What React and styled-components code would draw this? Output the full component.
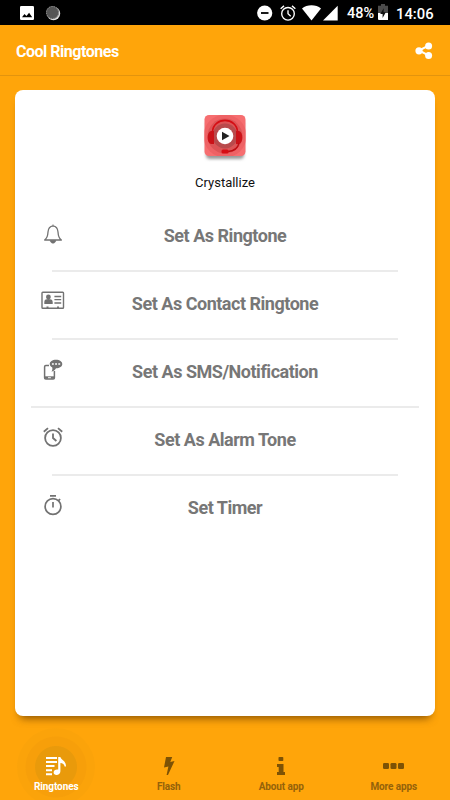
import React from "react";
import styled, { createGlobalStyle } from "styled-components";

const GlobalStyle = createGlobalStyle`
  * {
    box-sizing: border-box;
  }
  body {
    margin: 0;
    font-family: Roboto, "Liberation Sans", sans-serif;
  }
  svg {
    display: block;
    flex: none;
  }
`;
const Container = styled.div`
  width: 450px;
  height: 800px;
  display: flex;
  flex-direction: column;
  background-color: #ffa50a;
  overflow: hidden;
`;
const StatusBar = styled.div`
  height: 25px;
  padding-left: 20px;
  display: flex;
  justify-content: space-between;
  align-items: center;
  background-color: #000000;
  color: #ffffff;
`;
const StatusLeft = styled.div`
  display: flex;
  align-items: center;
  gap: 11px;
`;
const StatusRight = styled.div`
  width: 193px;
  display: grid;
  grid-template-columns: 23px 22px 21px 24px 31px 18px 54px;
  align-items: center;
`;
const StatusText = styled.span`
  height: 25px;
  padding-top: 3px;
  font-size: ${props => props.$size};
  font-weight: 500;
  line-height: 22px;
  white-space: nowrap;
`;
const Header = styled.header`
  height: 51px;
  padding: 0 17px 0 16px;
  display: flex;
  justify-content: space-between;
  align-items: center;
  border-bottom: 1px solid #e3940d;
`;
const Title = styled.h1`
  margin: 3px 0 0;
  font-size: 16px;
  font-weight: 700;
  line-height: 20px;
  letter-spacing: -0.48px;
  color: #ffffff;
`;
const Card = styled.main`
  height: 626px;
  margin: 14px 15px 0;
  padding-top: 22px;
  display: flex;
  flex-direction: column;
  align-items: center;
  flex: none;
  border-radius: 8px;
  background-color: #ffffff;
  box-shadow: 0 7px 8px -5px rgba(90, 50, 0, 0.75);
`;
const SongName = styled.p`
  height: 16px;
  margin: 12px 0 13px;
  font-size: 13px;
  line-height: 16px;
  color: #111111;
`;
const Row = styled.div`
  width: 100%;
  height: 66px;
  padding: 0 24px;
  display: grid;
  grid-template-columns: 28px 1fr 28px;
  align-items: center;
`;
const RowIcon = styled.span`
  display: flex;
  justify-content: center;
  padding-bottom: ${props => props.$lift}px;
  color: #727272;
`;
const RowLabel = styled.span`
  padding-bottom: 2px;
  font-size: 18px;
  font-weight: 700;
  line-height: 24px;
  letter-spacing: -0.48px;
  text-align: center;
  color: #777777;
`;
const Divider = styled.div`
  width: ${props => (props.$wide ? "388px" : "346px")};
  height: 2px;
  background-color: #ebebeb;
`;
const Nav = styled.nav`
  height: 84px;
  display: grid;
  grid-template-columns: repeat(4, 1fr);
  overflow: hidden;
`;
const NavItem = styled.div`
  position: relative;
  padding-top: 38px;
  display: flex;
  flex-direction: column;
  align-items: center;
  color: ${props => (props.$active ? "#ffffff" : "#7d5205")};
`;
const NavIcon = styled.span`
  height: 24px;
  display: flex;
  align-items: center;
  position: relative;
`;
const NavLabel = styled.span`
  margin-top: 1px;
  font-size: 10px;
  font-weight: 700;
  line-height: 16px;
  letter-spacing: -0.1px;
  color: ${props => (props.$active ? "#ffffff" : "#94620a")};
  position: relative;
`;
const Ripple = styled.span`
  position: absolute;
  left: 17px;
  top: 12px;
  width: 78px;
  height: 78px;
  border-radius: 50%;
  background: radial-gradient(
    circle,
    #e99a0b 0 20.5px,
    #f79f0a 21.5px 30px,
    #fba30a 31px
  );
`;

const PictureIcon = () => (
  <svg width="14" height="14" viewBox="0 0 14 14">
    <rect width="14" height="14" rx="1.3" fill="#fff" />
    <path d="M2 11.2 4.5 8l1.9 2.1L9.1 6.8l3.1 4.4z" fill="#000" />
  </svg>
);

const SyncIcon = () => (
  <svg width="16" height="16" viewBox="0 0 16 16">
    <circle cx="8.5" cy="8.5" r="6.7" fill="#ddd" />
    <circle cx="7.5" cy="7.5" r="6.5" fill="#555" />
    <circle
      cx="7.5"
      cy="7.5"
      r="6"
      fill="none"
      stroke="#999"
      strokeDasharray="1.2 1.2"
    />
  </svg>
);

const DisturbIcon = () => (
  <svg width="16" height="16" viewBox="0 0 16 16">
    <circle cx="7.7" cy="8" r="7.6" fill="#fff" />
    <path d="M4 8h7.5" stroke="#000" strokeWidth="1.8" />
  </svg>
);

const AlarmIcon = ({ size, stroke }) => (
  <svg
    width={size}
    height={size}
    viewBox="0 0 20 20"
    fill="none"
    stroke="currentColor"
    strokeWidth={stroke}
  >
    <circle cx="10" cy="11" r="7.9" />
    <path d="M10 6.5V11l3.4 3M.8 4.7l4.200-3.600M19.200 4.700l-4.200-3.600" />
  </svg>
);

const WifiIcon = () => (
  <svg width="19" height="16" viewBox="0 0 19 16">
    <path d="M0 3.5C5-.9 14-.9 19 3.5L9.5 15.5z" fill="#fff" />
  </svg>
);

const SignalIcon = () => (
  <svg width="15" height="16" viewBox="0 0 15 16">
    <path d="M0 15.5 14.7.8v14.7z" fill="#fff" />
  </svg>
);

const BatteryIcon = () => (
  <svg width="10" height="17" viewBox="0 0 10 17">
    <path d="M3 0h4v1.7h3V9H0V1.7h3z" fill="#4b4b4b" />
    <path d="M0 9h10v7H1a1 1 0 0 1-1-1z" fill="#fff" />
    <path d="M5.7 4.2 2.2 10h2.4v4l3.2-5.7H5.6z" fill="#111" />
  </svg>
);

const ShareIcon = () => (
  <svg width="18" height="18" viewBox="0 0 18 18">
    <path
      d="M13.5 4.700 4 9.500l9.500 4.800"
      fill="none"
      stroke="#fff"
      strokeWidth="2"
    />
    <g fill="#fff">
      <circle cx="13.6" cy="5" r="3.5" />
      <circle cx="4" cy="9.800" r="3.6" />
      <circle cx="13.6" cy="14.4" r="3.5" />
    </g>
  </svg>
);

const Artwork = () => (
  <svg width="50" height="51" viewBox="0 0 50 51">
    <defs>
      <clipPath id="tile">
        <rect x="4.5" y="3" width="41" height="41" rx="4.5" />
      </clipPath>
      <filter id="soft" x="-20%" y="-20%" width="140%" height="140%">
        <feGaussianBlur stdDeviation="1.4" />
      </filter>
    </defs>
    <rect
      x="6"
      y="8"
      width="38"
      height="39"
      rx="4"
      fill="#999"
      filter="url(#soft)"
    />
    <g clipPath="url(#tile)">
      <rect x="4" y="3" width="42" height="42" fill="#f66e70" />
      <circle cx="25" cy="24" r="21.5" fill="#ee6265" />
      <circle cx="25" cy="24" r="17.5" fill="#dc5456" />
      <circle cx="25" cy="24" r="12.5" fill="#b94a4c" />
      <path
        d="M12.5 20C13 4.5 37 4.5 37.5 20"
        fill="none"
        stroke="#d50d14"
        strokeWidth="1.7"
      />
      <path
        d="M14 19v13h-3c-4.5-1-4.5-12 0-13zM36 19v13h3c4.5-1 4.5-12 0-13z"
        fill="#cb1218"
      />
      <path
        d="M39 31c-1 5-5 8-11 8.5"
        fill="none"
        stroke="#bf0b10"
        strokeWidth="1.3"
      />
      <rect x="21.5" y="37.5" width="7" height="4" rx="1.5" fill="#d50d14" />
    </g>
    <circle cx="25" cy="24" r="8.3" fill="#fff" />
    <path d="m22 19.8 7.5 4.2-7.500 4.200z" fill="#222" />
  </svg>
);

const BellIcon = () => (
  <svg width="20" height="20" viewBox="0 0 20 20">
    <path
      d="M10 1.8C6.3 2.3 5.2 5 5 8c-.2 4-.7 6.2-3.4 8h16.8c-2.7-1.8-3.2-4-3.4-8-.2-3-1.3-5.7-5-6.2z"
      fill="none"
      stroke="currentColor"
      strokeWidth="1.3"
      strokeLinejoin="round"
    />
    <path
      d="M10 .3v2M7.2 16.5c.4 3.5 5.2 3.5 5.6 0z"
      fill="currentColor"
      stroke="currentColor"
      strokeWidth=".7"
    />
  </svg>
);

const ContactIcon = () => (
  <svg width="24" height="19" viewBox="0 0 24 19">
    <rect
      x="1"
      y="1.2"
      width="21.5"
      height="16"
      rx=".8"
      fill="none"
      stroke="currentColor"
      strokeWidth="1.4"
    />
    <g fill="currentColor">
      <circle cx="7.4" cy="6" r="2.4" />
      <path d="M3.3 13v-2c0-2.4 2-3 4.1-3s4.3.6 4.3 3v2z" />
      <path d="M5.5 15.5h2v2h-2zM16 15.5h2v2h-2z" />
    </g>
    <path
      d="M13.4 5.5h6.8M13.4 8.7h6.8M13.4 12h6.8"
      stroke="currentColor"
      strokeWidth="1.3"
    />
  </svg>
);

const MessageIcon = () => (
  <svg width="20" height="22" viewBox="0 0 20 22">
    <path
      d="M6 6.5H2.8c-.8 0-1.2.4-1.2 1.2v11.1c0 .8.4 1.2 1.2 1.2h7.4c.8 0 1.2-.4 1.2-1.2V12"
      fill="none"
      stroke="currentColor"
      strokeWidth="1.5"
    />
    <path d="M1.5 17.3h10v2.5h-10z" fill="currentColor" />
    <path d="M5 18.7h2.9" stroke="#fff" strokeWidth=".9" />
    <path
      d="M13 .7c3.7 0 6.3 1.9 6.3 4.3S16.7 9.3 13 9.3c-1 2-2.5 3-4.6 3.3 1-1.3 1.1-2.4.9-4.2C7.700 7.700 6.700 6.600 6.700 5 6.700 2.600 9.300.7 13 .7z"
      fill="currentColor"
    />
    <path
      d="M8.9 5h1.9M12.1 5H14M15.3 5h1.900"
      stroke="#fff"
      strokeWidth="1.6"
    />
  </svg>
);

const TimerIcon = () => (
  <svg
    width="20"
    height="22"
    viewBox="0 0 20 22"
    fill="none"
    stroke="currentColor"
    strokeWidth="1.7"
  >
    <circle cx="10" cy="12.5" r="7.9" />
    <path d="M7 1.8h6M10 8v5.5M15.3 6.800l1.800-1.800" />
  </svg>
);

const PlaylistIcon = () => (
  <svg width="22" height="20" viewBox="0 0 22 20">
    <path
      d="M1 2h11M1 6h11M1 10h8.5M1 14.3h6M1 18.2h6"
      stroke="#fff"
      strokeWidth="1.9"
    />
    <path
      d="M13.2 1h2.2c.3 3 5.6 3.2 5.6 9.500h-1.400c-.2-2.300-2-3.400-4.200-3.600v8.300c0 2.300-1.900 3.800-3.900 3.800-1.700 0-2.900-1-2.900-2.500 0-2.100 2.300-3.500 4.600-2.900z"
      fill="#fff"
    />
  </svg>
);

const FlashIcon = () => (
  <svg width="12" height="20" viewBox="0 0 12 20">
    <path
      d="M3 1h6.2L7.300 6 11.500 5 5 19H3.600l1.800-8.400L1 11.500z"
      fill="currentColor"
    />
  </svg>
);

const InfoIcon = () => (
  <svg width="10" height="20" viewBox="0 0 10 20" fill="currentColor">
    <rect x="2.5" y="1" width="4.8" height="4" rx=".8" />
    <path d="M1 8h6.5v8H9v3H1v-3h1.700v-5H1z" />
  </svg>
);

const MoreIcon = () => (
  <svg width="22" height="6" viewBox="0 0 22 6" fill="currentColor">
    <rect x="0" width="6" height="6" rx="1.3" />
    <rect x="7.5" width="6" height="6" rx="1.3" />
    <rect x="15" width="6" height="6" rx="1.3" />
  </svg>
);

const options = [
  { label: "Set As Ringtone", icon: <BellIcon />, lift: 6 },
  { label: "Set As Contact Ringtone", icon: <ContactIcon />, lift: 9 },
  { label: "Set As SMS/Notification", icon: <MessageIcon />, lift: 6, wide: true },
  { label: "Set As Alarm Tone", icon: <AlarmIcon size={20} stroke={1.8} />, lift: 8 },
  { label: "Set Timer", icon: <TimerIcon />, lift: 8 }
];

const tabs = [
  { label: "Ringtones", icon: <PlaylistIcon />, active: true },
  { label: "Flash", icon: <FlashIcon /> },
  { label: "About app", icon: <InfoIcon /> },
  { label: "More apps", icon: <MoreIcon /> }
];

const App = () => (
  <>
    <GlobalStyle />
    <Container>
      <StatusBar>
        <StatusLeft>
          <PictureIcon />
          <SyncIcon />
        </StatusLeft>
        <StatusRight>
          <DisturbIcon />
          <AlarmIcon size={16} stroke={1.7} />
          <WifiIcon />
          <SignalIcon />
          <StatusText $size="14.5px">48%</StatusText>
          <BatteryIcon />
          <StatusText $size="14.8px">14:06</StatusText>
        </StatusRight>
      </StatusBar>
      <Header>
        <Title>Cool Ringtones</Title>
        <ShareIcon />
      </Header>
      <Card>
        <Artwork />
        <SongName>Crystallize</SongName>
        {options.map((option, i) => (
          <React.Fragment key={option.label}>
            <Row>
              <RowIcon $lift={option.lift}>{option.icon}</RowIcon>
              <RowLabel>{option.label}</RowLabel>
            </Row>
            {i < options.length - 1 && <Divider $wide={option.wide} />}
          </React.Fragment>
        ))}
      </Card>
      <Nav>
        {tabs.map(tab => (
          <NavItem key={tab.label} $active={tab.active}>
            {tab.active && <Ripple />}
            <NavIcon>{tab.icon}</NavIcon>
            <NavLabel $active={tab.active}>{tab.label}</NavLabel>
          </NavItem>
        ))}
      </Nav>
    </Container>
  </>
);

export default App;
